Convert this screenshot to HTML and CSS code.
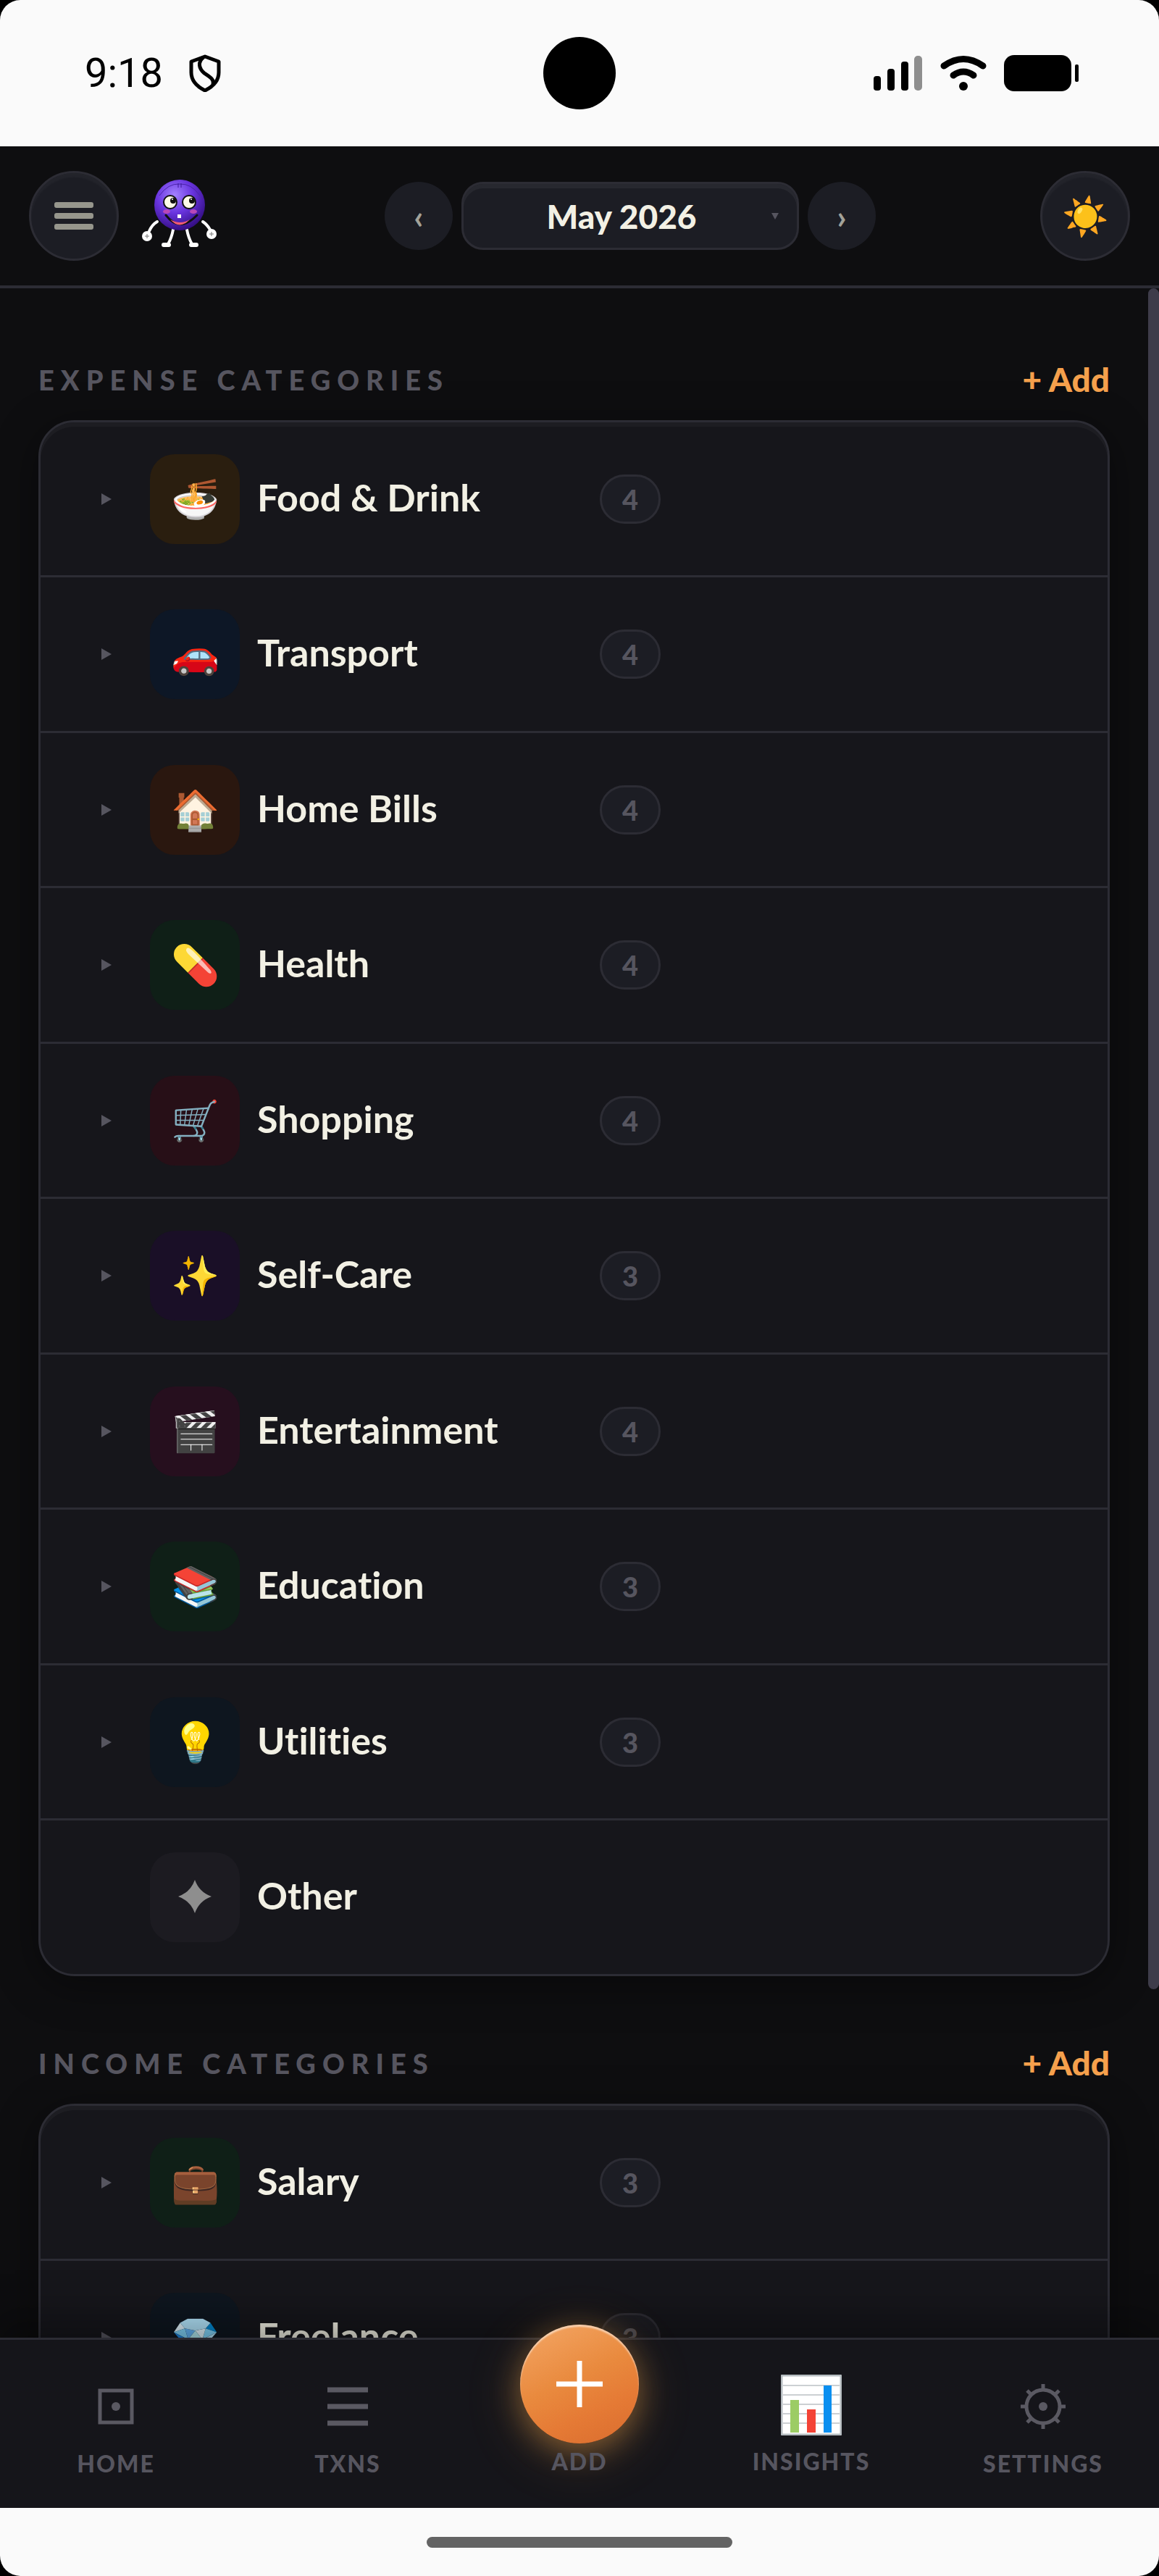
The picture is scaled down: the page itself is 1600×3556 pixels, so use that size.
FILE: index.html
```html
<!DOCTYPE html>
<html lang="en">
<head>
  <meta charset="UTF-8">
  <meta name="viewport" content="width=device-width, initial-scale=1.0">
  <title>Categories</title>
  <link rel="stylesheet" href="styles.css">
</head>
<body>
  <div class="phone">
    <div class="status-bar">
      <div class="status-left">
        <span class="clock">9:18</span>
        <svg width="44" height="52" viewBox="0 0 44 52" fill="none" stroke="#000" stroke-width="5" stroke-linejoin="round">
          <path d="M22 3 L41 10 V25 C41 37 32 45 22 50 C12 45 3 37 3 25 V10 Z"/>
          <path d="M20 4 C11 11 14 20 21 26 C30 32 35 35 33 42"/>
        </svg>
      </div>
      <div class="camera"></div>
      <div class="status-right">
        <svg width="68" height="50" viewBox="0 0 68 50">
          <rect x="0" y="29" width="10" height="20" rx="4"/>
          <rect x="19" y="19" width="10" height="30" rx="4"/>
          <rect x="38" y="9" width="10" height="40" rx="4"/>
          <rect x="56" y="1" width="11" height="48" rx="5" fill="#8e8e8e"/>
        </svg>
        <svg width="64" height="50" viewBox="0 0 64 50" fill="none" stroke="#000" stroke-width="9" stroke-linecap="round">
          <path d="M5 15 Q32 -4 59 15"/>
          <path d="M18 28 Q32 18 46 28"/>
          <circle cx="32" cy="43" r="6" fill="#000" stroke="none"/>
        </svg>
        <svg width="104" height="50" viewBox="0 0 104 50">
          <rect x="0" y="0" width="93" height="50" rx="14"/>
          <rect x="98" y="13" width="5" height="24" rx="2"/>
        </svg>
      </div>
    </div>

    <header class="topbar">
      <div class="top-left">
        <button class="round-btn" aria-label="Menu">
          <span class="bar"></span>
          <span class="bar"></span>
          <span class="bar"></span>
        </button>
        <svg class="mascot" width="108" height="100" viewBox="0 0 108 100">
          <defs>
            <radialGradient id="ball" cx="0.4" cy="0.3" r="0.7">
              <stop offset="0" stop-color="#a382ff"/>
              <stop offset="0.5" stop-color="#6a35e0"/>
              <stop offset="1" stop-color="#350f86"/>
            </radialGradient>
          </defs>
          <g fill="none" stroke="#fff" stroke-width="4" stroke-linecap="round">
            <path d="M21 58 Q14 62 10 71"/>
            <path d="M84 58 Q90 62 94 69"/>
            <path d="M43 69 Q41 80 36 89"/>
            <path d="M62 69 Q64 80 69 89"/>
          </g>
          <g fill="#fff">
            <circle cx="7" cy="78" r="7"/>
            <circle cx="96" cy="75" r="7"/>
            <rect x="27" y="87" width="13" height="6" rx="3"/>
            <rect x="65" y="87" width="13" height="6" rx="3"/>
          </g>
          <path d="M4 78h6M7 75v6M93 75h6M96 72v6" stroke="#777" stroke-width="1"/>
          <circle cx="52" cy="35" r="35" fill="url(#ball)"/>
          <path d="M24 22 Q36 5 52 6 Q68 5 80 22" fill="none" stroke="#4a24a8" stroke-width="1"/>
          <path d="M50 5v6M54 5v6" stroke="#3c189a" stroke-width="1"/>
          <ellipse cx="34" cy="44" rx="5" ry="3" fill="#b848b8"/>
          <ellipse cx="71" cy="44" rx="5" ry="3" fill="#b848b8"/>
          <g fill="#fffbe8" stroke="#111" stroke-width="2">
            <circle cx="39" cy="31" r="9"/>
            <circle cx="65" cy="31" r="9"/>
          </g>
          <circle cx="43" cy="29" r="4" fill="#111"/>
          <circle cx="69" cy="29" r="4" fill="#111"/>
          <circle cx="42" cy="27" r="1" fill="#fff"/>
          <circle cx="68" cy="27" r="1" fill="#fff"/>
          <path d="M33 49 Q52 74 76 49" fill="none" stroke="#111" stroke-width="3" stroke-linecap="round"/>
          <path d="M39 55 Q52 70 66 55 Q53 63 39 55Z" fill="#ef5b76"/>
          <rect x="49" y="48" width="5" height="5" fill="#fff"/>
        </svg>
      </div>
      <div class="month-nav">
        <button class="arrow-btn" aria-label="Previous month">‹</button>
        <div class="month-wrap">
          <select class="month" aria-label="Month">
            <option>May 2026</option>
          </select>
        </div>
        <button class="arrow-btn" aria-label="Next month">›</button>
      </div>
      <button class="round-btn theme" aria-label="Toggle theme">☀️</button>
    </header>

    <main class="content">
      <section>
        <div class="section-head">
          <h2>EXPENSE CATEGORIES</h2>
          <button class="add-link">+ Add</button>
        </div>
        <ul class="card">
          <li class="row"><i class="caret"></i><span class="tile amber">🍜</span><span class="name">Food &amp; Drink</span><span class="count">4</span></li>
          <li class="row"><i class="caret"></i><span class="tile blue">🚗</span><span class="name">Transport</span><span class="count">4</span></li>
          <li class="row"><i class="caret"></i><span class="tile orange">🏠</span><span class="name">Home Bills</span><span class="count">4</span></li>
          <li class="row"><i class="caret"></i><span class="tile green">💊</span><span class="name">Health</span><span class="count">4</span></li>
          <li class="row"><i class="caret"></i><span class="tile red">🛒</span><span class="name">Shopping</span><span class="count">4</span></li>
          <li class="row"><i class="caret"></i><span class="tile purple">✨</span><span class="name">Self-Care</span><span class="count">3</span></li>
          <li class="row"><i class="caret"></i><span class="tile pink">🎬</span><span class="name">Entertainment</span><span class="count">4</span></li>
          <li class="row"><i class="caret"></i><span class="tile green">📚</span><span class="name">Education</span><span class="count">3</span></li>
          <li class="row"><i class="caret"></i><span class="tile navy">💡</span><span class="name">Utilities</span><span class="count">3</span></li>
          <li class="row">
            <i></i>
            <span class="tile grey">
              <svg width="46" height="46" viewBox="0 0 46 46" fill="#8e8e8e"><path d="M23 0 Q29 17 46 23 Q29 29 23 46 Q17 29 0 23 Q17 17 23 0Z"/></svg>
            </span>
            <span class="name">Other</span>
          </li>
        </ul>
      </section>

      <section>
        <div class="section-head">
          <h2>INCOME CATEGORIES</h2>
          <button class="add-link">+ Add</button>
        </div>
        <ul class="card">
          <li class="row"><i class="caret"></i><span class="tile green">💼</span><span class="name">Salary</span><span class="count">3</span></li>
          <li class="row"><i class="caret"></i><span class="tile navy">💎</span><span class="name">Freelance</span><span class="count">3</span></li>
        </ul>
      </section>
      <div class="scroll-thumb"></div>
    </main>

    <nav class="tabs">
      <a class="tab" href="#home">
        <svg width="64" height="64" viewBox="0 0 64 64" fill="none" stroke="#5a5962" stroke-width="5">
          <rect x="10" y="10" width="44" height="44"/>
          <circle cx="32" cy="32" r="6" fill="#5a5962" stroke="none"/>
        </svg>
        <span>HOME</span>
      </a>
      <a class="tab" href="#txns">
        <svg width="64" height="64" viewBox="0 0 64 64" stroke="#5a5962" stroke-width="7">
          <path d="M4 9h56M4 32h56M4 55h56"/>
        </svg>
        <span>TXNS</span>
      </a>
      <a class="tab tall" href="#add">
        <b class="fab">
          <svg width="64" height="64" viewBox="0 0 64 64" stroke="#fff" stroke-width="7"><path d="M0 32h64M32 0v64"/></svg>
        </b>
        <span>ADD</span>
      </a>
      <a class="tab tall" href="#insights">
        <svg width="84" height="84" viewBox="0 0 84 84">
          <rect x="1" y="1" width="82" height="82" rx="2" fill="#fff" stroke="#b5bcc0" stroke-width="3"/>
          <path d="M3 15h78M3 28h78M3 41h78M3 54h78M3 67h78" stroke="#ccd0d3" stroke-width="2"/>
          <rect x="13" y="35" width="12" height="45" fill="#9ccc65"/>
          <rect x="36" y="48" width="12" height="32" fill="#f44336"/>
          <rect x="59" y="15" width="11" height="65" fill="#0a8ff0"/>
        </svg>
        <span>INSIGHTS</span>
      </a>
      <a class="tab" href="#settings">
        <svg width="64" height="64" viewBox="0 0 64 64" fill="none" stroke="#5a5962" stroke-width="5">
          <circle cx="32" cy="32" r="23"/>
          <circle cx="32" cy="32" r="6" fill="#5a5962" stroke="none"/>
          <path d="M32 1v8M32 55v8M1 32h8M55 32h8M10 10l6 6M48 48l6 6M10 54l6-6M48 16l6-6"/>
        </svg>
        <span>SETTINGS</span>
      </a>
    </nav>

    <div class="gesture-bar"><span></span></div>
  </div>
</body>
</html>
```
FILE: styles.css
```css
:root {
  --bg: #0e0e10;
  --card: #16161b;
  --raised: #1c1d24;
  --line: #2c2c34;
  --text: #f2f0e4;
  --muted: #56555f;
  --accent: #f5a04c;
}

* {
  box-sizing: border-box;
}

body {
  margin: 0;
  background: #000;
  font-family: Lato, "Open Sans", sans-serif;
  font-weight: 700;
  font-variant-ligatures: none;
  color: var(--text);
}

button, select {
  font: inherit;
  color: inherit;
  border: none;
  padding: 0;
  cursor: pointer;
}

.phone {
  height: 100vh;
  display: flex;
  flex-direction: column;
  overflow: hidden;
  border-radius: 28px;
  background: var(--bg);
}

/* system bar */
.status-bar {
  flex: none;
  height: 202px;
  padding: 0 110px;
  display: grid;
  grid-template-columns: 1fr 100px 1fr;
  align-items: center;
  background: #fafafa;
  color: #000;
}

.status-left, .status-right {
  display: flex;
  align-items: center;
}

.status-left {
  gap: 36px;
  padding-left: 7px;
}

.status-right {
  justify-content: flex-end;
  gap: 24px;
}

.clock {
  font: 400 56px/64px Roboto, sans-serif;
}

.camera {
  height: 100px;
  border-radius: 50%;
  background: #000;
}

/* header */
.topbar {
  flex: none;
  height: 196px;
  padding: 0 40px;
  display: flex;
  align-items: center;
  justify-content: space-between;
  border-bottom: 4px solid var(--line);
}

.top-left {
  display: flex;
  align-items: center;
  gap: 32px;
}

.round-btn {
  width: 124px;
  height: 124px;
  display: flex;
  flex-direction: column;
  align-items: center;
  justify-content: center;
  gap: 7px;
  border-radius: 50%;
  border: 3px solid var(--line);
  background: var(--raised);
  box-shadow: inset 0 6px 3px rgba(255, 255, 255, 0.03);
}

.bar {
  width: 54px;
  height: 8px;
  border-radius: 3px;
  background: #96968c;
}

.theme {
  font-size: 52px;
}

.month-nav {
  display: flex;
  align-items: center;
  gap: 12px;
}

.arrow-btn {
  width: 94px;
  height: 94px;
  border-radius: 50%;
  background: var(--raised);
  color: #a3a299;
  font-size: 46px;
}

.month-wrap {
  position: relative;
}

.month-wrap::after {
  content: "";
  position: absolute;
  right: 28px;
  top: 43px;
  border: 5px solid transparent;
  border-top: 9px solid var(--muted);
  border-bottom: none;
}

.month {
  appearance: none;
  width: 466px;
  height: 94px;
  padding-right: 24px;
  border: 3px solid var(--line);
  border-radius: 30px;
  background: var(--raised);
  box-shadow: inset 0 6px 0 rgba(255, 255, 255, 0.05);
  font-size: 46px;
  font-weight: 900;
  text-align: center;
  text-align-last: center;
}

/* lists */
.content {
  flex: 1;
  min-height: 0;
  position: relative;
  overflow: hidden;
  padding: 78px 68px 0 53px;
}

.content section {
  margin-bottom: 72px;
}

.section-head {
  height: 104px;
  padding-bottom: 9px;
  display: flex;
  align-items: center;
  justify-content: space-between;
}

.section-head h2 {
  margin: 0;
  font-size: 38px;
  font-weight: 900;
  letter-spacing: 9px;
  color: var(--muted);
}

.add-link {
  background: none;
  color: var(--accent);
  font-size: 46px;
  font-weight: 900;
}

.card {
  list-style: none;
  margin: 0;
  padding: 0;
  border: 3px solid var(--line);
  border-radius: 50px;
  background: var(--card);
  box-shadow: inset 0 6px 0 rgba(255, 255, 255, 0.03), 0 12px 60px rgba(0, 0, 0, 0.4);
}

.row {
  height: 214px;
  padding-left: 84px;
  display: grid;
  grid-template-columns: 43px 124px minmax(0, 449px) 84px;
  column-gap: 24px;
  align-items: center;
  border-bottom: 3px solid var(--line);
}

.row:nth-child(even) {
  height: 215px;
}

.row:last-child {
  height: 212px;
  border-bottom: none;
}

.caret {
  width: 0;
  border: 8px solid transparent;
  border-left: 14px solid var(--muted);
  border-right: none;
}

.tile {
  height: 124px;
  padding-bottom: 2px;
  display: flex;
  align-items: center;
  justify-content: center;
  border-radius: 34px;
  font-size: 54px;
}

.amber { background: #2a1e0f; }
.blue { background: #0d1726; }
.orange { background: #2a170f; }
.green { background: #0f1f17; }
.red { background: #270f17; }
.purple { background: #1a0f27; }
.pink { background: #260f1e; }
.navy { background: #0e161f; }
.grey { background: #1c1b21; }

.name {
  font-size: 52px;
  line-height: 64px;
  padding-bottom: 6px;
  white-space: nowrap;
}

.count {
  height: 68px;
  display: flex;
  align-items: center;
  justify-content: center;
  border: 3px solid var(--line);
  border-radius: 34px;
  background: var(--raised);
  color: var(--muted);
  font-size: 38px;
  font-weight: 900;
}

.scroll-thumb {
  position: absolute;
  right: 0;
  top: 0;
  width: 15px;
  height: 83%;
  border-radius: 8px;
  background: #3e3c4a;
}

/* bottom tabs */
.tabs {
  flex: none;
  position: relative;
  height: 235px;
  display: grid;
  grid-template-columns: repeat(5, 1fr);
  border-top: 3px solid var(--line);
  background: #15151a;
  box-shadow: 0 -20px 60px rgba(0, 0, 0, 0.4);
}

.tab {
  position: relative;
  padding-bottom: 41px;
  display: flex;
  flex-direction: column;
  align-items: center;
  justify-content: flex-end;
  gap: 27px;
  color: var(--muted);
  font-size: 32px;
  font-weight: 900;
  line-height: 40px;
  letter-spacing: 2px;
  text-decoration: none;
}

.tall {
  padding-bottom: 44px;
  gap: 16px;
}

.tab span {
  position: relative;
}

.fab {
  position: absolute;
  top: -21px;
  width: 164px;
  height: 164px;
  display: flex;
  align-items: center;
  justify-content: center;
  border-radius: 50%;
  background: linear-gradient(155deg, #f4a766, #e98a3e 45%, #e57a35 70%, #d96c2e);
  box-shadow: inset 0 3px 2px rgba(255, 255, 255, 0.5), 0 16px 80px rgba(245, 160, 76, 0.2), 0 10px 40px rgba(245, 170, 76, 0.4);
}

/* gesture area */
.gesture-bar {
  flex: none;
  height: 94px;
  display: flex;
  align-items: center;
  justify-content: center;
  background: #fafafa;
  position: relative;
}

.gesture-bar span {
  width: 422px;
  height: 15px;
  border-radius: 8px;
  background: #646464;
}
```
